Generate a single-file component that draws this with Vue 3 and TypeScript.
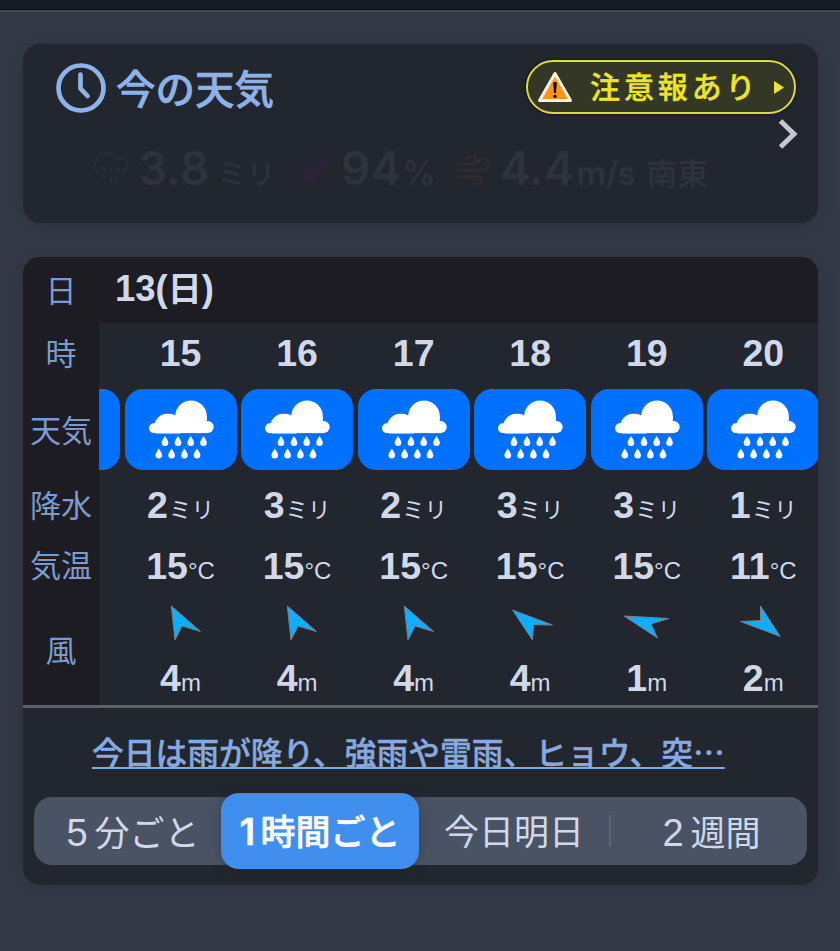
<script setup lang="ts">
interface Hour {
  hour: number
  rain: number
  temp: number
  dir: keyof typeof arrows
  wind: number
}

const arrows = {
  nnw: '-9.7,-16 19.5,9.5 1,4 -6,18',
  nw: '-17.5,-12 22.5,3 3.5,2.7 2.5,18',
  wnw: '-23,-6 22,-3.5 4,2 10.5,16',
  se: '17.2,14.5 -2.5,-16 -2.5,-1.5 -22.5,-0.5',
}

const hours: Hour[] = [
  { hour: 15, rain: 2, temp: 15, dir: 'nnw', wind: 4 },
  { hour: 16, rain: 3, temp: 15, dir: 'nnw', wind: 4 },
  { hour: 17, rain: 2, temp: 15, dir: 'nnw', wind: 4 },
  { hour: 18, rain: 3, temp: 15, dir: 'nw', wind: 4 },
  { hour: 19, rain: 3, temp: 15, dir: 'wnw', wind: 1 },
  { hour: 20, rain: 1, temp: 11, dir: 'se', wind: 2 },
]

const drops: [number, number][] = [
  [45, 56.8], [58, 56.8], [70.7, 56.8], [83.5, 56.8],
  [38.8, 69.3], [51.6, 69.3], [64.4, 69.3], [77, 69.3],
]
</script>

<template>
  <svg class="defs" width="0" height="0">
    <symbol id="rain" viewBox="5 4.5 112 81">
      <circle cx="71" cy="31.700" r="15.800" />
      <circle cx="48" cy="43" r="14" clip-path="inset(0 0 8px 0)" />
      <rect x="29" y="38.800" width="20" height="9.800" rx="4.900" />
      <rect x="40" y="38.800" width="42" height="9.800" />
      <rect x="70" y="32" width="16.800" height="12" />
      <circle cx="87.600" cy="42.500" r="6.100" />
      <rect x="76" y="42" width="12" height="6.600" />
      <path v-for="(d, i) in drops" :key="i" :transform="`translate(${d[0]} ${d[1]})`" d="M0-5.300 Q3.300-.5 3.300 1.500 A3.300 3.300 0 0 1-3.300 1.500 Q-3.300-.5 0-5.300z" />
    </symbol>
  </svg>
  <div class="screen">
    <div class="topbar"></div>
    <section class="card now">
      <header class="now-head">
        <svg class="clock" viewBox="0 0 50 50"><circle cx="25" cy="25" r="22.500" /><path d="M24.500 11.500v14l7 7.500" /></svg>
        <h1>今の天気</h1>
        <button class="alert">
          <svg class="warn" viewBox="0 0 36 34">
            <path class="tri" d="M18 3.500 33.500 30.500H2.500z" />
            <path class="mark" d="M16.200 12.500q1.800-1 3.600 0l-.9 10.500h-1.800z" /><circle cx="18" cy="26.500" r="1.700" />
          </svg>
          <span>注意報あり</span>
          <svg class="play" viewBox="0 0 10 13"><path d="M0 0 10 6.500 0 13z" /></svg>
        </button>
      </header>
      <svg class="chev" viewBox="0 0 20 30"><path d="M2.500 2 16 15 2.500 28" /></svg>
      <div class="stats">
        <svg class="s-cloud" viewBox="0 0 36 34"><path d="M7 22.500A7.500 7.500 0 0 1 3 11 A11 11 0 0 1 23 7 A8 8 0 1 1 29 22.500M11 17v4M18 17v4M25 17v4M11 25v4M18 26v5M24 25v5" /></svg>
        <span class="s-rain"><b>3.8</b><i>ミリ</i></span>
        <svg class="s-drop" viewBox="0 0 30 28"><path d="M9.500 5Q18 14 18 18.500A8.500 8.500 0 0 1 1 18.500Q1 14 9.500 5zM23 0Q28.500 5.500 28.500 8.500A5.500 5.500 0 0 1 17.500 8.500Q17.500 5.500 23 0z" /></svg>
        <span class="s-hum"><b>94</b><i>%</i></span>
        <svg class="s-wind" viewBox="0 0 34 30"><path d="M1 9h15a4.300 4.300 0 1 0-4.300-4.300M1 15h26a5.500 5.500 0 1 0-5.500-5.500M1 21.500h21a4 4 0 1 1-4 4" /></svg>
        <span class="s-speed"><b>4.4</b><i>m/s</i></span>
        <span class="s-dir">南東</span>
      </div>
    </section>

    <section class="card forecast">
      <div class="table">
        <div class="labels">
          <span class="r-date">日</span><span class="r-hour">時</span><span class="r-sky">天気</span>
          <span class="r-rain">降水</span><span class="r-temp">気温</span><span class="r-wind">風</span>
        </div>
        <div class="scroller">
          <div class="date">13(<em>日</em>)</div>
          <div class="track">
            <div class="col"><div class="r-hour"></div><div class="tile"></div></div>
            <div v-for="h in hours" :key="h.hour" class="col">
              <div class="r-hour num">{{ h.hour }}</div>
              <div class="tile"><svg><use href="#rain" /></svg></div>
              <div class="val r-rain"><b>{{ h.rain }}</b><i class="mm">ミリ</i></div>
              <div class="val r-temp"><b>{{ h.temp }}</b><i class="deg">°</i><i class="cel">C</i></div>
              <div class="arrow"><svg viewBox="-26 -26 52 52"><polygon :points="arrows[h.dir]" /></svg></div>
              <div class="val r-speed"><b>{{ h.wind }}</b><i class="ms">m</i></div>
            </div>
          </div>
        </div>
      </div>
      <a class="notice">今日は雨が降り、強雨や雷雨、ヒョウ、突⋯</a>
      <nav class="tabs">
        <span class="t1"><u>5</u>分ごと</span>
        <span class="t2"><u>1</u>時間ごと</span>
        <span class="t3">今日明日</span>
        <span class="t4"><u>2</u>週間</span>
      </nav>
    </section>
  </div>
</template>

<style>
body { margin: 0; background: #333947; }
</style>

<style scoped>
* { box-sizing: border-box; }
i, em { font-style: normal; }
svg { display: block; flex: none; }
.defs { position: absolute; }
.screen { height: 951px; overflow: hidden; background: #333947; font-family: "Liberation Sans", "Noto Sans CJK JP", sans-serif; color: #d0d8e9; }
.topbar { height: 12px; background: #161c26; border-bottom: 2px solid #424857; box-shadow: inset 0 -1px #080c15; }
.card { width: 795px; margin-left: 23px; border-radius: 17px; background: #22262e; box-shadow: 0 2px 14px rgba(48, 40, 40, .42); overflow: hidden; }
.now { height: 179px; margin-top: 32px; }
.now-head { display: flex; align-items: flex-start; height: 86px; padding: 16px 22px 0 33px; }
.clock { width: 50px; height: 50px; margin-top: 3px; fill: none; stroke: #8eb2e7; stroke-width: 4.700; stroke-linecap: round; stroke-linejoin: round; }
h1 { margin: 2px 0 0 10px; font: 500 39.500px/50px "Noto Sans CJK JP", sans-serif; color: #8eb2e7; -webkit-text-stroke: .6px #8eb2e7; }
.alert { display: flex; align-items: center; width: 270px; height: 54px; margin-left: auto; padding: 0 0 0 9px; border: 2px solid #dfdb3c; border-radius: 27px; background: #343626; color: #eee526; box-shadow: 0 0 2px 1px #14171a; }
.warn { width: 36px; height: 34px; }
.tri { fill: #ff9417; stroke: #fff2df; stroke-width: 3; stroke-linejoin: round; }
.alert span { margin: -4px 0 0 17px; font: 500 30px/40px "Noto Sans CJK JP", sans-serif; letter-spacing: 3.900px; white-space: nowrap; -webkit-text-stroke: .4px #eee526; }
.play { width: 10px; height: 13px; margin-left: 14px; fill: #eee526; }
.chev { width: 20px; height: 30px; margin: -11px 20px 0 auto; fill: none; stroke: #c6c7d0; stroke-width: 5; }
.stats { display: flex; align-items: baseline; height: 60px; padding-left: 70px; margin-top: -11px; color: #2d323b; font-family: Inter, "Noto Sans CJK JP", sans-serif; line-height: 60px; white-space: nowrap; }
.stats b { font-size: 46px; font-weight: 600; }
.stats i { font-weight: 600; }
.stats svg { fill: none; stroke-width: 2; }
.s-cloud { width: 36px; height: 34px; margin-bottom: -2px; stroke: #262f3b; }
.s-rain { width: 161px; margin-left: 9px; }
.stats .s-rain i { margin-left: 8px; font-size: 29px; font-weight: 500; }
.s-drop { width: 30px; height: 28px; }
.stats .s-drop { fill: #2d2338; }
.s-hum { width: 115px; margin-left: 12px; }
.s-hum i { margin-left: 1px; font-size: 34px; font-weight: 500; }
.s-wind { width: 34px; height: 30px; margin-bottom: -1px; }
.stats .s-wind { stroke: #332c2e; stroke-width: 2.500; }
.s-speed { margin-left: 10px; }
.s-speed i { margin-left: 2px; font-size: 33px; letter-spacing: -.4px; }
.s-dir { margin-left: 11px; font-size: 31px; font-weight: 500; }
.forecast { height: 628px; margin-top: 34px; }
.table { display: flex; height: 451px; border-bottom: 3px solid #5d606c; }
.labels { width: 76px; background: #1d1c22; color: #7c9bcb; font: 400 31px "Noto Sans CJK JP", sans-serif; text-align: center; }
.labels span { display: flex; align-items: center; justify-content: center; padding-bottom: 4px; white-space: nowrap; }
.r-date { height: 66px; }
.r-hour { height: 63px; }
.labels .r-hour { padding-bottom: 7px; }
.r-sky { height: 88px; }
.labels .r-rain { padding-bottom: 2px; }
.scroller { flex: 1; overflow: hidden; }
.date { height: 66px; padding-left: 16px; background: #1d1c22; font: 700 36.500px/64px "Liberation Sans", "Noto Sans CJK JP", sans-serif; white-space: nowrap; }
.date em { font-family: "Noto Sans CJK JP", sans-serif; font-weight: 700; font-size: 34px; line-height: 1; }
.track { display: flex; gap: 4.550px; width: 820px; margin-left: -91px; }
.col { flex: none; width: 112px; }
.num { font-size: 37.500px; font-weight: 700; line-height: 60px; text-align: center; }
.tile { height: 81px; margin: 3px 0 4px; border-radius: 18px; background: #0071ff; }
.tile svg { width: 112px; height: 81px; fill: #fff; }
.r-rain { height: 61px; }
.r-temp { height: 61px; }
.labels .r-wind { height: 109px; }
.val { display: flex; align-items: baseline; justify-content: center; font-size: 24px; line-height: 62px; white-space: nowrap; }
.val b { font-size: 37.500px; }
.mm { margin-left: 1px; font: 400 22.500px/1 "Noto Sans CJK JP", sans-serif; }
.cel { font-size: 24px; }
.ms { font-size: 24px; }
.arrow { display: flex; justify-content: center; height: 52px; }
.arrow svg { width: 52px; height: 52px; fill: #0caeff; stroke: #777e85; stroke-width: 1; }
.r-speed { line-height: 60px; }
.notice { display: block; padding-left: 69px; height: 89px; font: 500 31.750px/86px "Noto Sans CJK JP", sans-serif; color: #86a9df; text-decoration: underline; text-decoration-thickness: 2px; text-underline-offset: 2px; white-space: nowrap; -webkit-text-stroke: .4px #86a9df; }
.tabs { display: flex; align-items: center; width: 773px; height: 68px; margin-left: 11px; border-radius: 18px; background: #495364; font: 400 35px/66px "Noto Sans CJK JP", sans-serif; white-space: nowrap; }
.tabs span { text-align: center; }
.tabs u { display: inline-block; width: 28px; font: 400 38px/1 "Liberation Sans", sans-serif; text-align: left; text-decoration: none; }
.t1 { width: 187px; padding-left: 11px; }
.t2 { width: 198px; height: 76px; line-height: 74px; border-radius: 18px; background: #408fee; color: #fff; font-weight: 500; box-shadow: 0 0 12px rgba(30, 38, 52, .4); -webkit-text-stroke: .5px #fff; }
.tabs .t2 u { width: 21px; font: 600 37px/1 Inter, sans-serif; }
.t3 { width: 192px; height: 32px; line-height: 30px; border-right: 2px solid #5b6475; }
.t4 { flex: 1; padding-left: 5px; }
</style>
